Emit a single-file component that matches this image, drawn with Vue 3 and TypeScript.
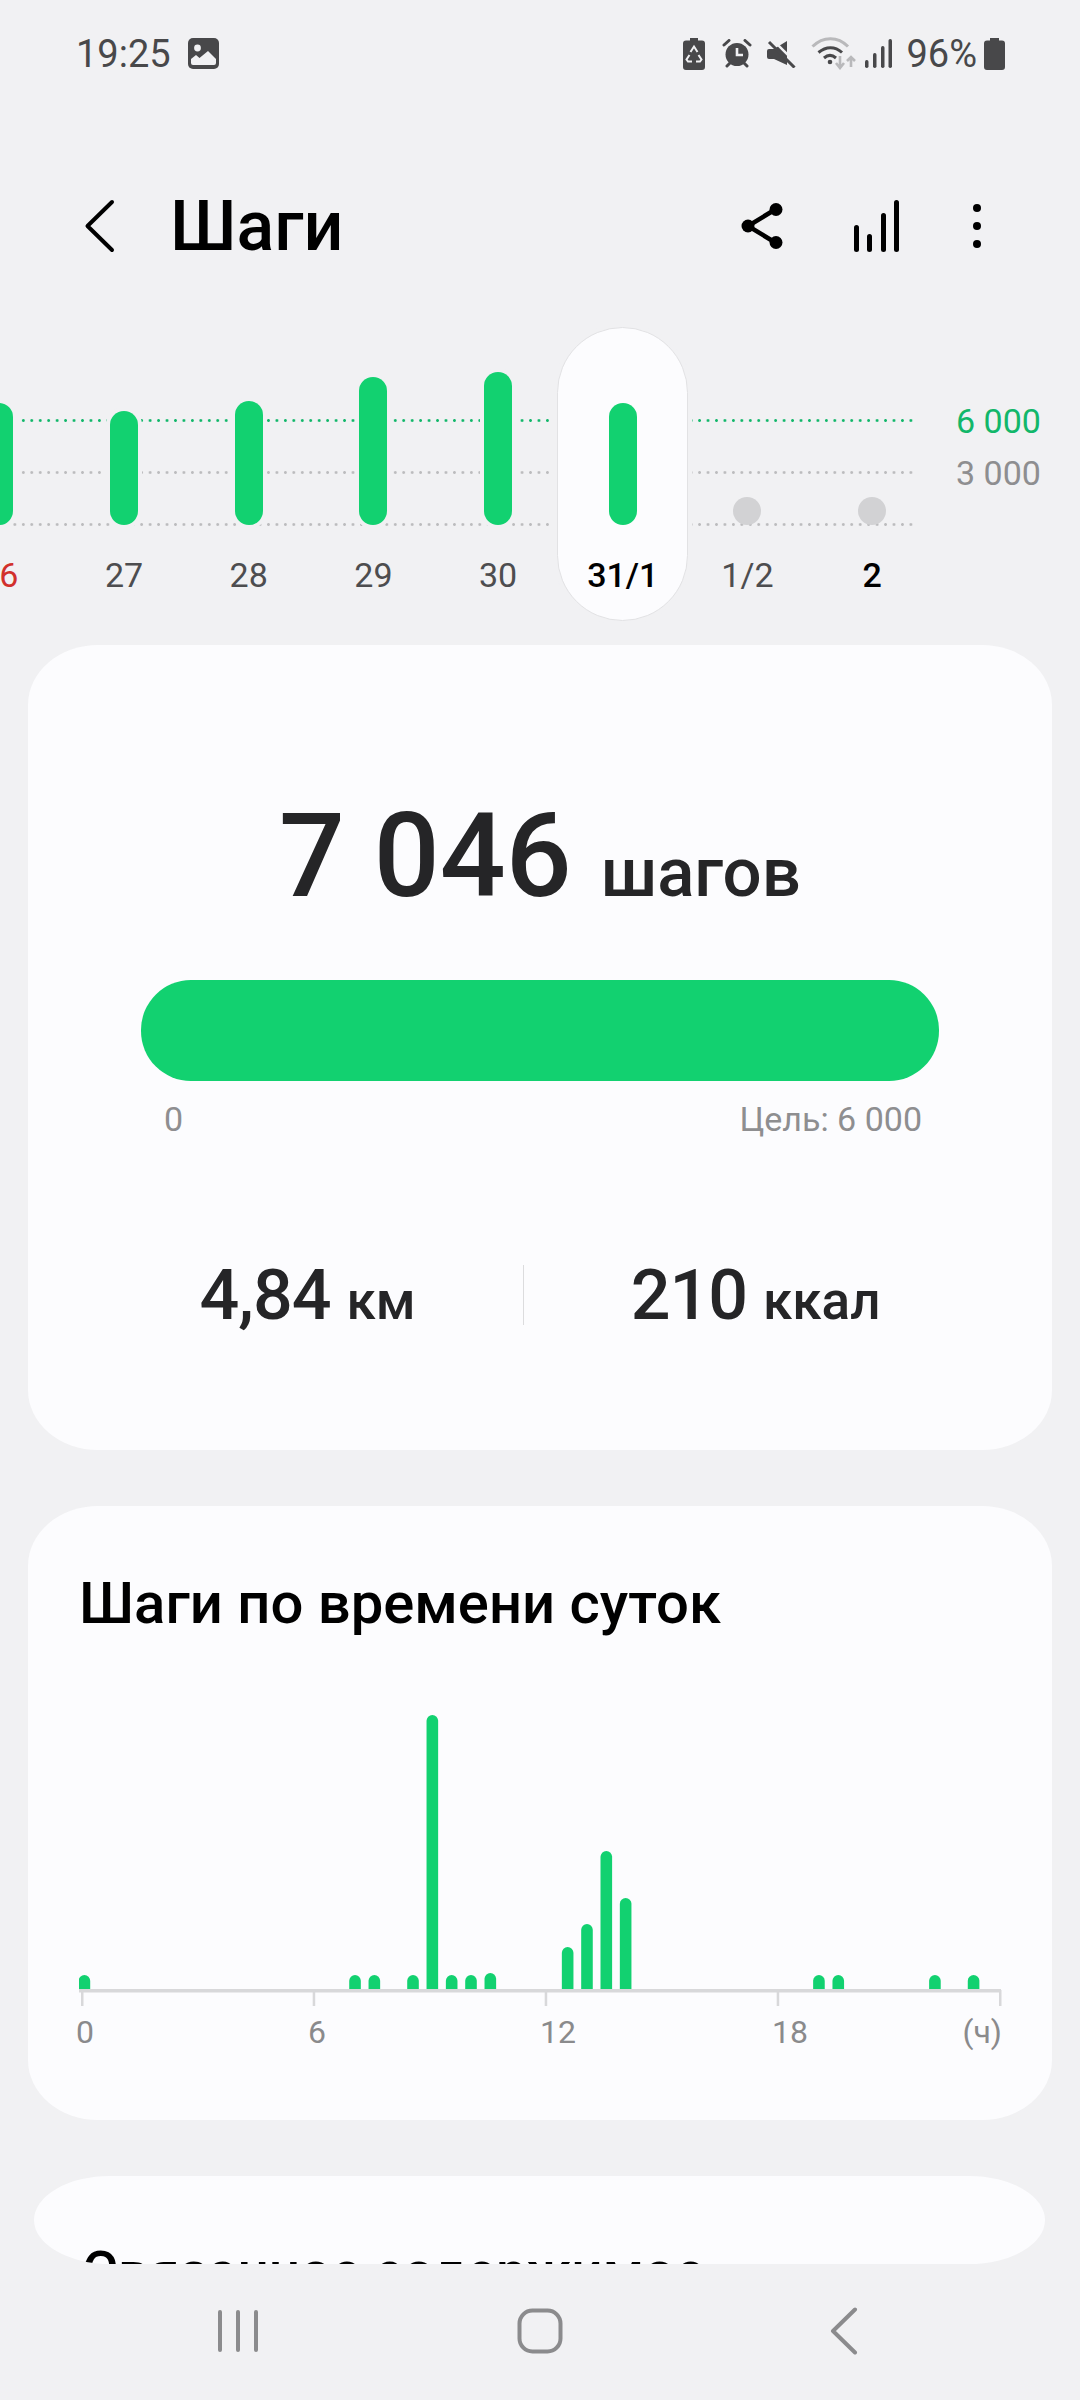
<script setup lang="ts">
// Шаги — экран статистики шагов
const GREEN = '#12d170'

const days = [
  { label: '26', height: 122, tone: 'red' },
  { label: '27', height: 114, tone: '' },
  { label: '28', height: 124, tone: '' },
  { label: '29', height: 148, tone: '' },
  { label: '30', height: 153, tone: '' },
  { label: '31/1', height: 122, tone: 'current' },
  { label: '1/2', height: 28, tone: 'empty' },
  { label: '2', height: 28, tone: 'today' },
]

// индекс получаса и высота столбика
const hourly: [number, number][] = [
  [0, 15], [14, 15], [15, 15], [17, 15], [18, 275], [19, 15], [20, 15], [21, 17],
  [25, 43], [26, 66], [27, 139], [28, 92], [38, 15], [39, 15], [44, 15], [46, 15],
]
const hourLabels = ['0', '6', '12', '18']
const ticks = [2, 233.7, 465.7, 697.7, 920]

// столбик со скруглённым верхом
function barPath(i: number, h: number) {
  const r = 5.8
  const x = -0.4 + 19.33 * i
  const top = 278 - h
  return `M${x} 278V${top + r}a${r} ${r} 0 0 1 ${r * 2} 0V278z`
}
</script>

<template>
  <div class="screen">
    <header class="status">
      <div class="status-left">
        <span class="clock">19:25</span>
        <svg class="ic-image" width="31" height="31" viewBox="0 0 31 31">
          <rect width="31" height="31" rx="5" fill="#48484a" />
          <circle cx="9.500" cy="10" r="3.400" fill="#f1f1f3" />
          <path d="M3 21l5-4 3.500 3L20 13l8 8v4a2 2 0 0 1-2 2H5a2 2 0 0 1-2-2z" fill="#f1f1f3" />
        </svg>
      </div>
      <div class="status-right">
        <svg width="22" height="32" viewBox="0 0 22 32">
          <path d="M7 0h8v2.500h4a3 3 0 0 1 3 3V29a3 3 0 0 1-3 3H3a3 3 0 0 1-3-3V5.500a3 3 0 0 1 3-3h4z" fill="#48484a" />
          <path d="M7.500 14L11 8.500 14.500 14M15.500 17l3 4.500-1.500 2h-4M9 23.500H5l-1.500-2 3-4.500" fill="none" stroke="#f1f1f3" stroke-width="2" />
        </svg>
        <svg class="ic-alarm" width="30" height="29" viewBox="0 0 30 29">
          <circle cx="15" cy="15.500" r="11.500" fill="#48484a" />
          <path d="M2 6l5-4.500M28 6l-5-4.500M5 27l2.500-2.500M25 27l-2.500-2.500" stroke="#48484a" stroke-width="3" stroke-linecap="round" />
          <path d="M15 9v7h6" fill="none" stroke="#f1f1f3" stroke-width="2.600" />
        </svg>
        <svg class="ic-mute" width="29" height="28" viewBox="0 0 29 28">
          <path d="M0 11a2 2 0 0 1 2-2h5l13-8v24l-13-6H2a2 2 0 0 1-2-2z" fill="#48484a" />
          <path d="M5 -1L31 25" stroke="#f1f1f3" stroke-width="2.400" />
          <path d="M2 2l25.500 25.500" stroke="#48484a" stroke-width="3" />
        </svg>
        <svg class="ic-wifi" width="45" height="33" viewBox="0 0 45 33">
          <path d="M1.500 9.500C12 -1 27 -1 37 9.500" fill="none" stroke="#b9b9bb" stroke-width="3" />
          <path d="M7.500 15.500C15 9 24 9 31 15.500" fill="none" stroke="#48484a" stroke-width="3" />
          <path d="M13 21c4-3.500 8-3.500 12 0" fill="none" stroke="#48484a" stroke-width="3" />
          <circle cx="19" cy="25" r="2.300" fill="#48484a" />
          <path d="M29 19v11M25 26l4 5 4-5M40 30V20M36 24l4-4 4 4" fill="none" stroke="#b9b9bb" stroke-width="2.600" />
        </svg>
        <svg class="ic-signal" width="27" height="29" viewBox="0 0 27 29">
          <rect x="0" y="21" width="3.500" height="8" rx="1.700" fill="#48484a" />
          <rect x="8" y="14" width="3.500" height="15" rx="1.700" fill="#48484a" />
          <rect x="16" y="7" width="3.500" height="22" rx="1.700" fill="#48484a" />
          <rect x="23.500" y="0" width="3.500" height="29" rx="1.700" fill="#48484a" />
        </svg>
        <span class="percent">96%</span>
        <svg class="ic-battery" width="21" height="32" viewBox="0 0 21 32">
          <path d="M6 0h9v2.500h3a3 3 0 0 1 3 3V29a3 3 0 0 1-3 3H3a3 3 0 0 1-3-3V5.500a3 3 0 0 1 3-3h3z" fill="#48484a" />
        </svg>
      </div>
    </header>

    <nav class="appbar">
      <svg class="ic-back" width="31" height="56" viewBox="0 0 31 56">
        <path d="M28 4L3.500 28 28 52" fill="none" stroke="#000" stroke-width="4" stroke-linecap="round" stroke-linejoin="round" />
      </svg>
      <h1 class="title">Шаги</h1>
      <div class="actions">
        <svg class="ic-share" width="44" height="48" viewBox="0 0 44 48">
          <path d="M36 7L8 24l28 17" fill="none" stroke="#000" stroke-width="4.500" />
          <circle cx="36" cy="7.500" r="6.500" />
          <circle cx="8" cy="24" r="6.500" />
          <circle cx="36" cy="40.500" r="6.500" />
        </svg>
        <svg class="ic-stats" width="46" height="52" viewBox="0 0 46 52">
          <rect x="0" y="25" width="5" height="27" rx="2.500" />
          <rect x="13" y="34" width="5" height="18" rx="2.500" />
          <rect x="27" y="13" width="5" height="39" rx="2.500" />
          <rect x="40" y="0" width="5" height="52" rx="2.500" />
        </svg>
        <svg class="ic-more" width="8" height="44" viewBox="0 0 8 44">
          <circle cx="4" cy="4" r="4" />
          <circle cx="4" cy="22" r="4" />
          <circle cx="4" cy="40" r="4" />
        </svg>
      </div>
    </nav>

    <section class="week">
      <div class="week-chart">
        <div class="grid-lines">
          <i class="line goal" />
          <i class="line" />
          <i class="line" />
        </div>
        <div class="day-list">
          <div v-for="d in days" :key="d.label" class="day" :class="d.tone">
            <div class="day-plot">
              <span class="day-bar" :style="{ height: d.height + 'px' }" />
            </div>
            <span class="day-label">{{ d.label }}</span>
          </div>
        </div>
      </div>
      <div class="scale">
        <span class="scale-goal">6 000</span>
        <span class="scale-mid">3 000</span>
      </div>
    </section>

    <main class="cards">
      <section class="card summary">
        <div class="total"><b>7 046</b><span>шагов</span></div>
        <div class="progress" />
        <div class="progress-labels"><span>0</span><span>Цель: 6 000</span></div>
        <div class="stats">
          <div class="stat"><b>4,84</b><span>км</span></div>
          <i class="stat-divider" />
          <div class="stat"><b>210</b><span>ккал</span></div>
        </div>
      </section>

      <section class="card daily">
        <h2 class="heading">Шаги по времени суток</h2>
        <svg class="hours" width="924" height="294" viewBox="0 0 924 294">
          <path v-for="[i, h] in hourly" :key="i" :d="barPath(i, h)" :fill="GREEN" />
          <rect x="0" y="277" width="922" height="3.500" fill="#d8d8da" />
          <rect v-for="t in ticks" :key="t" :x="t" y="278" width="2.500" height="16" fill="#d8d8da" />
        </svg>
        <div class="hour-labels">
          <span v-for="l in hourLabels" :key="l" class="hour">{{ l }}</span>
          <span class="unit">(ч)</span>
        </div>
      </section>

      <section class="card related">
        <h2 class="heading">Связанное содержимое</h2>
      </section>
    </main>

    <footer class="navbar">
      <svg width="40" height="44" viewBox="0 0 40 44">
        <path d="M2 3v38M20 3v38M38 3v38" stroke="#8b8b8d" stroke-width="4" stroke-linecap="round" />
      </svg>
      <svg class="nav-home" width="46" height="46" viewBox="0 0 46 46">
        <rect x="2.500" y="2.500" width="41" height="41" rx="13" fill="none" stroke="#8b8b8d" stroke-width="4" />
      </svg>
      <svg class="nav-back" width="28" height="48" viewBox="0 0 28 48">
        <path d="M25 2.500L3 24l22 21.500" fill="none" stroke="#8b8b8d" stroke-width="4" stroke-linecap="round" stroke-linejoin="round" />
      </svg>
    </footer>
  </div>
</template>

<style>
html, body { margin: 0; background: #f1f1f3; }
</style>

<style scoped>
.screen {
  width: 1080px;
  height: 2400px;
  display: flex;
  flex-direction: column;
  overflow: hidden;
  background: #f1f1f3;
  color: #252527;
  font-family: Roboto, "Noto Sans", sans-serif;
}

/* статус-бар */
.status {
  height: 107px;
  flex: none;
  display: flex;
  justify-content: space-between;
  align-items: center;
  padding: 0 75px 0 76px;
  box-sizing: border-box;
  color: #48484a;
}
.status-left, .status-right { display: flex; align-items: center; }
.clock { font-size: 38px; line-height: 44px; }
.ic-image { margin-left: 17px; }
.ic-alarm { margin-left: 17px; }
.ic-mute { margin-left: 15px; }
.ic-wifi { margin-left: 15px; }
.ic-signal { margin-left: 9px; }
.percent { margin-left: 14px; font-size: 38px; line-height: 44px; }
.ic-battery { margin-left: 7px; }

/* шапка */
.appbar {
  height: 120px;
  margin-top: 59px;
  flex: none;
  display: flex;
  align-items: center;
  padding: 0 99px 0 84px;
  box-sizing: border-box;
}
.title {
  margin: 0 0 0 55px;
  font-size: 70px;
  line-height: 84px;
  font-weight: 500;
  color: #000;
}
.actions { margin-left: auto; display: flex; align-items: center; }
.ic-stats { margin-left: 70px; }
.ic-more { margin-left: 73px; }

/* неделя */
.week {
  height: 359px;
  flex: none;
  display: flex;
}
.week-chart {
  position: relative;
  width: 914px;
  flex: none;
  overflow: hidden;
}
.grid-lines {
  position: absolute;
  left: 0;
  right: 0;
  top: 133px;
  height: 107px;
  display: flex;
  flex-direction: column;
  justify-content: space-between;
}
.line {
  display: block;
  height: 3px;
  background: radial-gradient(circle, #bcbcbe 1.100px, transparent 1.700px) 2.200px 0 / 8.460px 3px repeat-x;
}
.line.goal {
  background: radial-gradient(circle, #12b76a 1.100px, transparent 1.700px) 2.200px 0 / 8.460px 3px repeat-x;
}
.day-list {
  position: relative;
  display: flex;
  margin-left: -63px;
  padding-top: 41px;
}
.day {
  width: 124.700px;
  flex: none;
  display: flex;
  flex-direction: column;
  align-items: center;
  position: relative;
}
.day-plot {
  height: 198px;
  display: flex;
  align-items: flex-end;
  position: relative;
}
.day-bar {
  display: block;
  width: 28px;
  border-radius: 14px;
  background: #12d170;
  box-shadow: 0 0 0 4px #f1f1f3;
}
.day.current .day-bar { box-shadow: none; }
.day-label {
  position: relative;
  margin-top: 30px;
  font-size: 34px;
  line-height: 40px;
  color: #4d4d4f;
}
.day.red .day-label { color: #d2302c; }
.day.current .day-label { color: #000; font-weight: 500; }
.day.today .day-label { color: #000; font-weight: 500; }
.day.empty .day-bar, .day.today .day-bar { background: #d2d2d4; box-shadow: none; }
.day.current::before {
  content: "";
  position: absolute;
  left: -3px;
  right: -3px;
  top: 0;
  height: 294px;
  box-sizing: border-box;
  background: #fcfcfe;
  border: 1px solid #e2e2e4;
  border-radius: 66px;
  box-shadow: 0 0 0 4px #f1f1f3;
}
.scale {
  display: flex;
  flex-direction: column;
  margin-left: 42px;
  padding-top: 115px;
  font-size: 34px;
  line-height: 40px;
}
.scale-goal { color: #12b76a; }
.scale-mid { margin-top: 12px; color: #8e8e90; }

/* карточки */
.cards {
  flex: none;
  height: 1620px;
  overflow: hidden;
  padding: 0 28px;
  box-sizing: border-box;
  display: flex;
  flex-direction: column;
  gap: 56px;
}
.card {
  flex: none;
  background: #fcfcfe;
  border-radius: 70px / 60px;
  box-sizing: border-box;
}
.summary {
  height: 805px;
  padding: 143px 113px 0;
}
.total {
  display: flex;
  justify-content: center;
  align-items: baseline;
  gap: 29px;
  color: #252527;
}
.total b { font-size: 116px; line-height: 136px; font-weight: 500; }
.total span { font-size: 69px; line-height: 76px; font-weight: 500; }
.progress {
  margin-top: 56px;
  height: 101px;
  border-radius: 50px;
  background: #12d170;
}
.progress-labels {
  display: flex;
  justify-content: space-between;
  margin-top: 18px;
  padding: 0 17px 0 23px;
  font-size: 34px;
  line-height: 40px;
  color: #8e8e90;
}
.stats {
  display: flex;
  justify-content: center;
  align-items: center;
  gap: 107px;
  margin-top: 115px;
}
.stat {
  display: flex;
  align-items: baseline;
  gap: 16px;
}
.stat b { font-size: 70px; line-height: 82px; font-weight: 500; letter-spacing: -1px; }
.stat span { font-size: 53px; line-height: 66px; font-weight: 500; }
.stat-divider { display: block; width: 1px; height: 60px; background: #dcdcde; }

.daily {
  height: 614px;
  padding: 64px 51px 0;
}
.heading {
  margin: 0;
  font-size: 58px;
  line-height: 66px;
  font-weight: 500;
  color: #000;
}
.hours { display: block; margin-top: 76px; }
.hour-labels {
  display: grid;
  grid-template-columns: repeat(3, 232px) 1fr auto;
  margin-top: 7px;
  margin-left: -3px;
  font-size: 32px;
  line-height: 38px;
  color: #8a8a8c;
}
.unit { margin-right: -1px; }
.related {
  margin: 0 7px 0 6px;
  height: 88px;
  overflow: hidden;
  padding: 63px 48px 0;
  border-radius: 76px / 44px;
}
.related .heading { font-size: 55px; }

/* навигация */
.navbar {
  flex: 1;
  display: flex;
  align-items: center;
  padding: 0 0 3px 218px;
}
.nav-home { margin-left: 259px; }
.nav-back { margin-left: 267px; }
</style>
